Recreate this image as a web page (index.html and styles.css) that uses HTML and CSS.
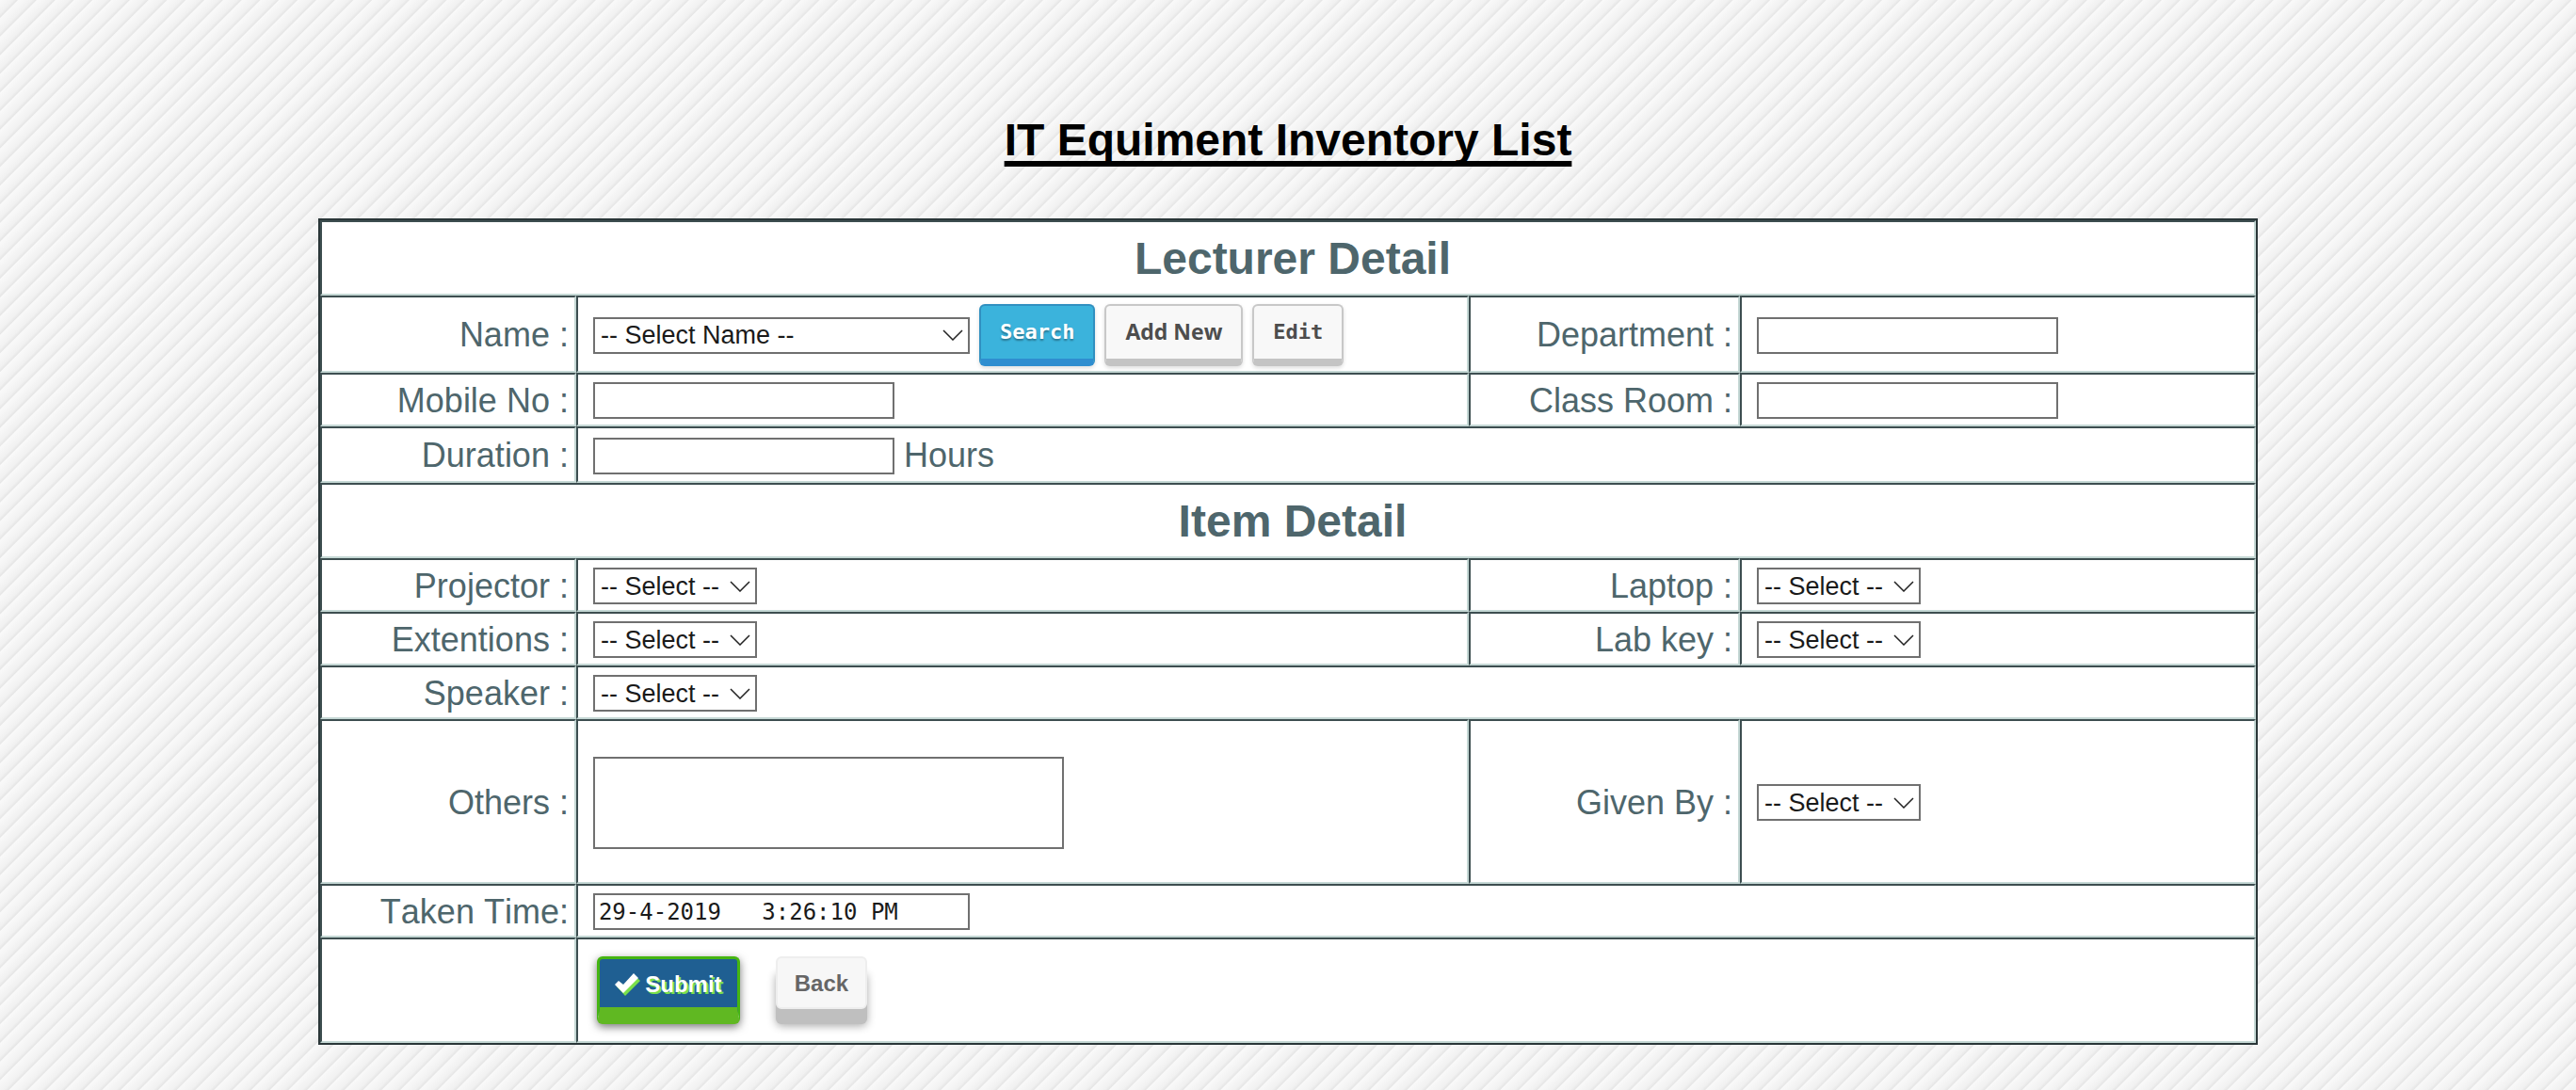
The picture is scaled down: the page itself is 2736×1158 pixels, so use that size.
FILE: index.html
```html
<!DOCTYPE html>
<html lang="en">
<head>
<meta charset="utf-8">
<title>IT Equiment Inventory List</title>
<link rel="stylesheet" href="styles.css">
</head>
<body>
<h1 class="title">IT Equiment Inventory List</h1>
<form>
<table class="sheet">
  <colgroup><col class="c1"><col class="c2"><col class="c3"><col class="c4"></colgroup>
  <tr class="section"><th colspan="4"><h2>Lecturer Detail</h2></th></tr>
  <tr class="tall">
    <th><label for="name">Name :</label></th>
    <td><div class="line"><span class="pick wide"><select id="name"><option>-- Select Name --</option></select><svg class="arrow" viewBox="0 0 22 12"><path d="M1 1l10 10L21 1"/></svg></span>
      <button type="button" class="btn blue mono">Search</button>
      <button type="button" class="btn sans">Add New</button>
      <button type="button" class="btn mono">Edit</button></div></td>
    <th><label for="dept">Department :</label></th>
    <td><div class="line"><input id="dept" type="text"></div></td>
  </tr>
  <tr>
    <th><label for="mobile">Mobile No :</label></th>
    <td><div class="line"><input id="mobile" type="text"></div></td>
    <th><label for="room">Class Room :</label></th>
    <td><div class="line"><input id="room" type="text"></div></td>
  </tr>
  <tr class="duration">
    <th><label for="duration">Duration :</label></th>
    <td colspan="3"><div class="line"><input id="duration" type="text"><span>Hours</span></div></td>
  </tr>
  <tr class="section"><th colspan="4"><h2>Item Detail</h2></th></tr>
  <tr>
    <th><label for="projector">Projector :</label></th>
    <td><div class="line"><span class="pick"><select id="projector"><option>-- Select --</option></select><svg class="arrow" viewBox="0 0 22 12"><path d="M1 1l10 10L21 1"/></svg></span></div></td>
    <th><label for="laptop">Laptop :</label></th>
    <td><div class="line"><span class="pick"><select id="laptop"><option>-- Select --</option></select><svg class="arrow" viewBox="0 0 22 12"><path d="M1 1l10 10L21 1"/></svg></span></div></td>
  </tr>
  <tr>
    <th><label for="ext">Extentions :</label></th>
    <td><div class="line"><span class="pick"><select id="ext"><option>-- Select --</option></select><svg class="arrow" viewBox="0 0 22 12"><path d="M1 1l10 10L21 1"/></svg></span></div></td>
    <th><label for="key">Lab key :</label></th>
    <td><div class="line"><span class="pick"><select id="key"><option>-- Select --</option></select><svg class="arrow" viewBox="0 0 22 12"><path d="M1 1l10 10L21 1"/></svg></span></div></td>
  </tr>
  <tr>
    <th><label for="speaker">Speaker :</label></th>
    <td colspan="3"><div class="line"><span class="pick"><select id="speaker"><option>-- Select --</option></select><svg class="arrow" viewBox="0 0 22 12"><path d="M1 1l10 10L21 1"/></svg></span></div></td>
  </tr>
  <tr class="others">
    <th><label for="others">Others :</label></th>
    <td><div class="line"><textarea id="others"></textarea></div></td>
    <th><label for="given">Given By :</label></th>
    <td><div class="line"><span class="pick"><select id="given"><option>-- Select --</option></select><svg class="arrow" viewBox="0 0 22 12"><path d="M1 1l10 10L21 1"/></svg></span></div></td>
  </tr>
  <tr>
    <th><label for="taken">Taken Time:</label></th>
    <td colspan="3"><div class="line"><input id="taken" class="time" type="text" value="29-4-2019   3:26:10 PM"></div></td>
  </tr>
  <tr class="actions">
    <th></th>
    <td colspan="3"><div class="line"><button type="submit" class="submit"><svg class="check" viewBox="0 0 27 24"><path class="under" d="M2 14l4-4 5 4L22 3l5 5-16 16z"/><path d="M0 12l4-4 5 4L20 0l5 5L9 21z"/></svg>Submit</button><button type="button" class="back">Back</button></div></td>
  </tr>
</table>
</form>
</body>
</html>
```
FILE: styles.css
```css
* { box-sizing: border-box; }

body {
  margin: 0;
  padding: 120px 0 48px;
  min-height: 100vh;
  font-family: "Liberation Sans", Arial, sans-serif;
  font-kerning: none;
  color: #4e666c;
  background: repeating-linear-gradient(135deg, #f9f9f9 0, #f1f1f1 10px, #e6e6e6 13px, #f9f9f9 14px);
}

.title {
  margin: 0 0 54px;
  font-size: 48px;
  line-height: 58px;
  text-align: center;
  color: #000;
  text-decoration: underline 6px;
  text-underline-offset: 6px;
  text-decoration-skip-ink: none;
}

.sheet {
  width: 75.3%;
  margin: 0 auto;
  table-layout: fixed;
  border: 2px solid #2a3638;
  border-spacing: 0;
  background: #fff;
  font-size: 36px;
  line-height: 42px;
}
.c1 { width: 13.23%; }
.c2 { width: 46.11%; }
.c3 { width: 14.01%; }

.sheet th, .sheet td {
  height: 57px;
  padding: 2px 6px 0;
  border: 2px solid #c5d8d5;
  border-top-color: #3d4e50;
  border-left-color: #3d4e50;
  font-weight: normal;
  text-align: right;
  vertical-align: middle;
}
.sheet td { padding-left: 16px; }
.sheet .section th { height: 80px; text-align: center; padding-left: 16px; }
.sheet .tall td { height: 82px; }
.sheet .duration td { height: 60px; }
.sheet .others td { height: 175px; }
.sheet .actions td { height: 112px; padding: 0 20px; }
h2 { margin: 0; font-size: 48px; line-height: 56px; }

.line { display: flex; align-items: center; gap: 10px; }
.actions .line { gap: 38px; }

input, select, textarea {
  margin: 0;
  border: 2px solid #707070;
  border-radius: 0;
  background: #fff;
  color: #1a1a1a;
  font: 27px "Liberation Sans", Arial, sans-serif;
}
input { width: 320px; height: 39px; padding: 0 6px; }
.time { width: 400px; padding: 0 4px; font: 24px "DejaVu Sans Mono", monospace; }
textarea { width: 500px; height: 98px; resize: none; display: block; }

.pick { display: grid; width: 174px; align-items: center; }
.wide { width: 400px; }
.pick > * { grid-area: 1 / 1; }
select { appearance: none; width: 100%; height: 39px; padding: 0 6px; }
.arrow {
  justify-self: end;
  width: 22px;
  height: 12px;
  margin-right: 7px;
  fill: none;
  stroke: #222;
  stroke-width: 1.5;
  pointer-events: none;
}

button { margin: 0; font-weight: bold; white-space: nowrap; }
.btn {
  height: 66px;
  padding: 0 20px 2px;
  border: 2px solid #c8c8c8;
  border-bottom: 8px solid #c4c4c4;
  border-radius: 6px;
  background: #f8f8f8;
  color: #4d4d4d;
  box-shadow: 0 2px 4px #0002;
}
.mono { font: bold 22px "DejaVu Sans Mono", monospace; }
.sans { font: bold 23px "Open Sans", sans-serif; }
.blue {
  background: #3bb3dc;
  border-color: #3190c0;
  border-bottom-color: #2f8ed0;
  color: #fff;
  text-shadow: 0 2px 2px #0005;
}

.submit {
  display: flex;
  align-items: center;
  justify-content: center;
  gap: 5px;
  width: 152px;
  height: 72px;
  padding: 2px 0 0;
  border: 3px solid #45b512;
  border-bottom: 18px solid #60b822;
  border-radius: 6px;
  background: #1f5f92;
  color: #fff;
  font: bold 24px "Liberation Sans", Arial, sans-serif;
  text-shadow: 2px 2px 0 #7ae04a;
  box-shadow: 0 3px 10px #0008;
}
.check { width: 27px; height: 24px; fill: #fff; }
.under { fill: #7ae04a; }
.back {
  width: 97px;
  height: 56px;
  margin-bottom: 16px;
  padding: 2px 0 0;
  border: 2px solid #eee;
  border-radius: 6px;
  background: #f7f7f7;
  color: #666;
  font: bold 24px "Liberation Sans", Arial, sans-serif;
  box-shadow: 0 16px 0 #bfbfbf, 0 18px 10px #0005;
}
```
